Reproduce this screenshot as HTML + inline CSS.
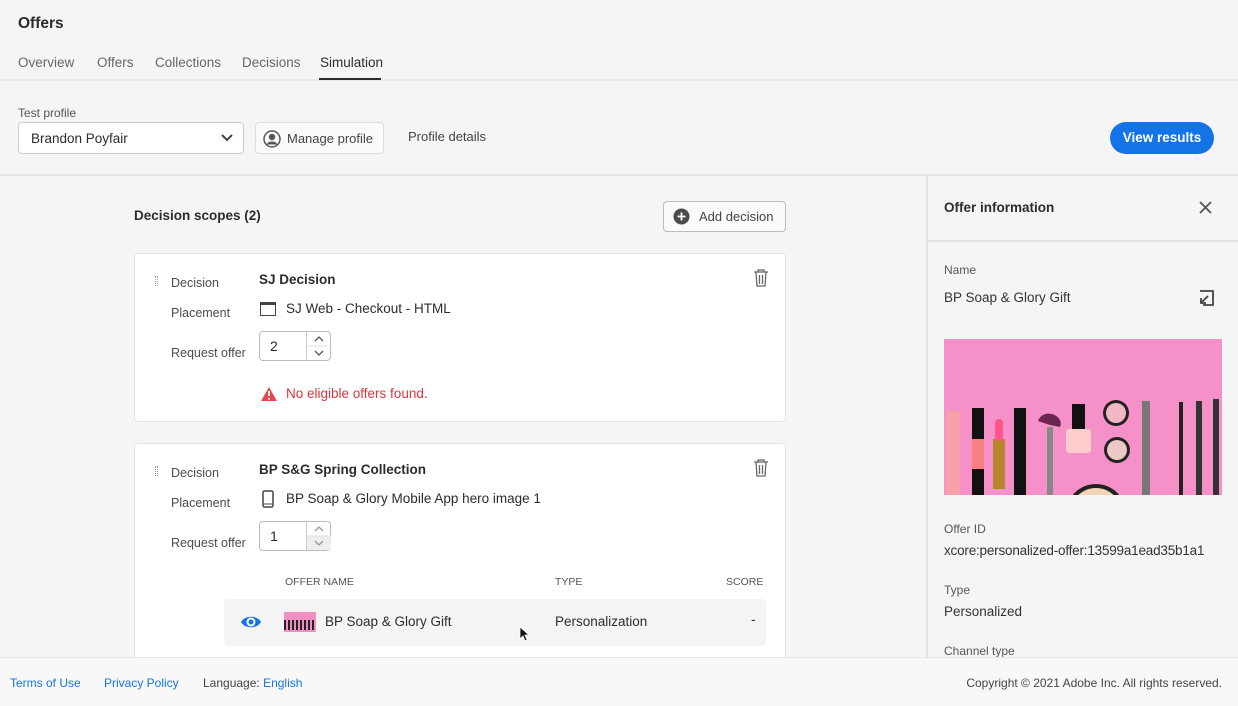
<!DOCTYPE html>
<html><head><meta charset="utf-8"><style>
*{box-sizing:border-box;margin:0;padding:0}
body{width:1238px;height:706px;overflow:hidden;background:#f5f5f5;font-family:"Liberation Sans",sans-serif;color:#2c2c2c;position:relative}
.a{position:absolute}
.lbl{font-size:12px;color:#555}
.g{color:#4b4b4b;font-size:12.5px}
.card{position:absolute;left:134px;width:652px;background:#fff;border:1px solid #e4e4e4;border-radius:4px}
.step{position:absolute;left:124px;width:72px;height:30px;border:1px solid #bbb;border-radius:4px;background:#fff}
.step .n{position:absolute;left:10px;top:6px;font-size:14px}
.step .b{position:absolute;left:46px;top:0;width:24px;height:28px;border-left:1px solid #ccc}
.t{font-size:13.5px}
</style></head><body>
<div class="a" style="left:18px;top:15px;font-size:15.5px;font-weight:bold">Offers</div>
<div class="a" style="top:55px;font-size:13.5px;color:#666">
<span class="a" style="left:18px">Overview</span><span class="a" style="left:97px">Offers</span><span class="a" style="left:155px;white-space:nowrap">Collections</span><span class="a" style="left:242px">Decisions</span><span class="a" style="left:320px;color:#2c2c2c">Simulation</span></div>
<div class="a" style="top:79px;left:0;width:1238px;height:2px;background:#e6e6e6"></div>
<div class="a" style="top:78px;left:319px;width:62px;height:2px;background:#2c2c2c"></div>
<div class="a lbl" style="left:18px;top:106px">Test profile</div>
<div class="a t" style="left:18px;top:122px;width:226px;height:32px;border:1px solid #ccc;border-radius:4px;background:#fff;padding:8px 12px">Brandon Poyfair
<svg class="a" style="right:10px;top:11px" width="12" height="8"><path d="M1 1l5 5 5-5" fill="none" stroke="#444" stroke-width="2"/></svg></div>
<div class="a" style="left:255px;top:122px;width:129px;height:32px;border:1px solid #ddd;border-radius:4px;background:#fafafa;font-size:13px;color:#444;padding:8px 0 0 31px;white-space:nowrap">Manage profile
<svg class="a" style="left:7px;top:7px" width="18" height="18"><circle cx="9" cy="9" r="8" fill="none" stroke="#555" stroke-width="1.5"/><circle cx="9" cy="7" r="3.2" fill="#555"/><path d="M3.5 14.5c2-4 9-4 11 0" fill="#555"/></svg></div>
<div class="a" style="left:408px;top:129px;font-size:13px;color:#444">Profile details</div>
<div class="a" style="left:1110px;top:122px;width:104px;height:32px;border-radius:16px;background:#1473e6;color:#fff;font-size:13.5px;font-weight:bold;text-align:center;line-height:32px">View results</div>
<div class="a" style="top:174px;left:0;width:1238px;height:2px;background:#e6e6e6"></div>

<div class="a" style="left:134px;top:208px;font-size:13.5px;font-weight:bold">Decision scopes (2)</div>
<div class="a" style="left:663px;top:201px;width:123px;height:31px;border:1px solid #bbb;border-radius:4px;background:#fafafa;font-size:13px;color:#444;padding:7px 0 0 35px;white-space:nowrap">Add decision
<svg class="a" style="left:9px;top:6px" width="17" height="17"><circle cx="8.5" cy="8.5" r="8" fill="#4b4b4b"/><path d="M8.5 4.5v8M4.5 8.5h8" stroke="#fff" stroke-width="1.8"/></svg></div>

<div class="card" style="top:253px;height:169px">
<div class="a" style="left:20px;top:22px;width:3px;height:10px;border-left:1px dotted #999;border-right:1px dotted #999"></div>
<div class="a g" style="left:36px;top:22px">Decision</div>
<div class="a" style="left:124px;top:18px;font-size:13.5px;font-weight:bold">SJ Decision</div>
<svg class="a" style="left:618px;top:15px" width="16" height="18"><path d="M1 3h14M5 3V1h6v2M3 3l1 14h8l1-14M6.5 6v9M9.5 6v9" fill="none" stroke="#666" stroke-width="1.3"/></svg>
<div class="a g" style="left:36px;top:52px">Placement</div>
<div class="a" style="left:125px;top:48px;width:16px;height:14px;border:1.5px solid #444;border-top-width:3px"></div>
<div class="a t" style="left:151px;top:47px">SJ Web - Checkout - HTML</div>
<div class="a g" style="left:36px;top:92px">Request offer</div>
<div class="step" style="top:77px"><span class="n">2</span><div class="b"><svg width="24" height="28"><path d="M8 9l4-4 4 4M8 19l4 4 4-4" fill="none" stroke="#555" stroke-width="1.3"/><path d="M0 14h24" stroke="#ddd"/></svg></div></div>
<svg class="a" style="left:125px;top:132px" width="18" height="16"><path d="M9 1L17 15H1z" fill="#e34850"/><path d="M9 5v5M9 12v1.5" stroke="#fff" stroke-width="2"/></svg>
<div class="a t" style="left:151px;top:132px;color:#d7373f">No eligible offers found.</div>
</div>

<div class="card" style="top:443px;height:230px">
<div class="a" style="left:20px;top:22px;width:3px;height:10px;border-left:1px dotted #999;border-right:1px dotted #999"></div>
<div class="a g" style="left:36px;top:22px">Decision</div>
<div class="a" style="left:124px;top:18px;font-size:13.5px;font-weight:bold">BP S&amp;G Spring Collection</div>
<svg class="a" style="left:618px;top:15px" width="16" height="18"><path d="M1 3h14M5 3V1h6v2M3 3l1 14h8l1-14M6.5 6v9M9.5 6v9" fill="none" stroke="#666" stroke-width="1.3"/></svg>
<div class="a g" style="left:36px;top:52px">Placement</div>
<svg class="a" style="left:127px;top:46px" width="12" height="18"><rect x="1" y="1" width="10" height="16" rx="1.5" fill="none" stroke="#444" stroke-width="1.5"/><path d="M1 14h10" stroke="#444"/></svg>
<div class="a t" style="left:151px;top:47px">BP Soap &amp; Glory Mobile App hero image 1</div>
<div class="a g" style="left:36px;top:92px">Request offer</div>
<div class="step" style="top:77px"><span class="n">1</span><div class="b"><svg width="24" height="28"><rect x="0" y="14" width="24" height="14" fill="#eee"/><path d="M8 9l4-4 4 4M8 19l4 4 4-4" fill="none" stroke="#999" stroke-width="1.3"/><path d="M0 14h24" stroke="#ddd"/></svg></div></div>
<div class="a" style="left:150px;top:132px;font-size:10.5px;color:#555">OFFER NAME</div>
<div class="a" style="left:420px;top:132px;font-size:10.5px;color:#555">TYPE</div>
<div class="a" style="left:591px;top:132px;font-size:10.5px;color:#555">SCORE</div>
<div class="a" style="left:89px;top:155px;width:542px;height:47px;background:#f4f4f4;border-radius:4px">
<svg class="a" style="left:16px;top:14px" width="22" height="18"><path d="M1 9C5 2 17 2 21 9 17 16 5 16 1 9z" fill="#1473e6"/><circle cx="11" cy="9" r="4.5" fill="#fff"/><circle cx="11" cy="9" r="2.5" fill="#1473e6"/></svg>
<div class="a" style="left:60px;top:13px;width:32px;height:20px;background:#f08fc0"><div style="margin-top:8px;height:10px;background:repeating-linear-gradient(90deg,#222 0 2px,#f08fc0 2px 4px)"></div></div>
<div class="a t" style="left:101px;top:15px">BP Soap &amp; Glory Gift</div>
<div class="a t" style="left:331px;top:15px">Personalization</div>
<div class="a t" style="left:527px;top:13px">-</div>
</div>
</div>
<svg class="a" style="left:519px;top:626px" width="10" height="16"><path d="M1 1v12l3-3 2 5 2-1-2-5h4z" fill="#111" stroke="#fff" stroke-width=".8"/></svg>

<div class="a" style="left:926px;top:176px;width:2px;height:482px;background:#e2e2e2"></div>
<div class="a" style="left:944px;top:200px;font-size:13.5px;font-weight:bold">Offer information</div>
<svg class="a" style="left:1199px;top:201px" width="13" height="13"><path d="M1 1l11 11M12 1L1 12" stroke="#555" stroke-width="1.8"/></svg>
<div class="a" style="left:928px;top:240px;width:310px;height:2px;background:#e2e2e2"></div>
<div class="a lbl" style="left:944px;top:263px">Name</div>
<div class="a t" style="left:944px;top:290px;color:#333">BP Soap &amp; Glory Gift</div>
<svg class="a" style="left:1197px;top:290px" width="18" height="17"><path d="M3 1h13v14H6" fill="none" stroke="#444" stroke-width="1.8"/><path d="M11 6L4 13M4 8v5h5" fill="none" stroke="#444" stroke-width="1.8"/></svg>
<svg class="a" style="left:944px;top:339px" width="278" height="156">
<rect width="278" height="156" fill="#f690c8"/>
<rect x="2" y="72" width="14" height="84" rx="3" fill="#f7a0a8"/>
<rect x="28" y="69" width="12" height="87" fill="#111"/><rect x="28" y="100" width="12" height="30" fill="#f98080"/>
<rect x="49" y="100" width="12" height="50" fill="#b8862d"/><rect x="51" y="80" width="8" height="22" rx="4" fill="#f58"/>
<rect x="70" y="69" width="12" height="87" fill="#111"/>
<path d="M94 82c5-14 27-6 22 6l-10 -2z" fill="#6a2550"/><rect x="103" y="88" width="6" height="68" fill="#888"/>
<rect x="128" y="65" width="13" height="25" fill="#111"/><rect x="122" y="90" width="25" height="24" rx="3" fill="#fcc"/>
<circle cx="172" cy="74" r="13" fill="#222"/><circle cx="172" cy="74" r="10" fill="#f2b8c3"/>
<circle cx="173" cy="111" r="13" fill="#222"/><circle cx="173" cy="111" r="10" fill="#ecc9c4"/>
<circle cx="152" cy="175" r="30" fill="#222"/><circle cx="152" cy="175" r="26" fill="#f0d4b4"/>
<rect x="198" y="62" width="8" height="94" fill="#777"/>
<rect x="235" y="63" width="4" height="93" fill="#222"/><rect x="252" y="62" width="6" height="94" fill="#333"/><rect x="269" y="60" width="6" height="96" fill="#333"/>
</svg>
<div class="a lbl" style="left:944px;top:522px">Offer ID</div>
<div class="a" style="left:944px;top:543px;font-size:13.5px;color:#333;letter-spacing:-0.2px">xcore:personalized-offer:13599a1ead35b1a1</div>
<div class="a lbl" style="left:944px;top:583px">Type</div>
<div class="a t" style="left:944px;top:604px;color:#333">Personalized</div>
<div class="a lbl" style="left:944px;top:644px">Channel type</div>

<div class="a" style="left:0;top:657px;width:1238px;height:49px;background:#f8f8f8;border-top:1px solid #e6e6e6;font-size:12px">
<span class="a" style="left:10px;top:18px;color:#1473e6">Terms of Use</span>
<span class="a" style="left:104px;top:18px;color:#1473e6">Privacy Policy</span>
<span class="a" style="left:203px;top:18px;color:#444">Language: <span style="color:#1473e6">English</span></span>
<span class="a" style="right:16px;top:18px;color:#444">Copyright © 2021 Adobe Inc. All rights reserved.</span>
</div>
</body></html>
